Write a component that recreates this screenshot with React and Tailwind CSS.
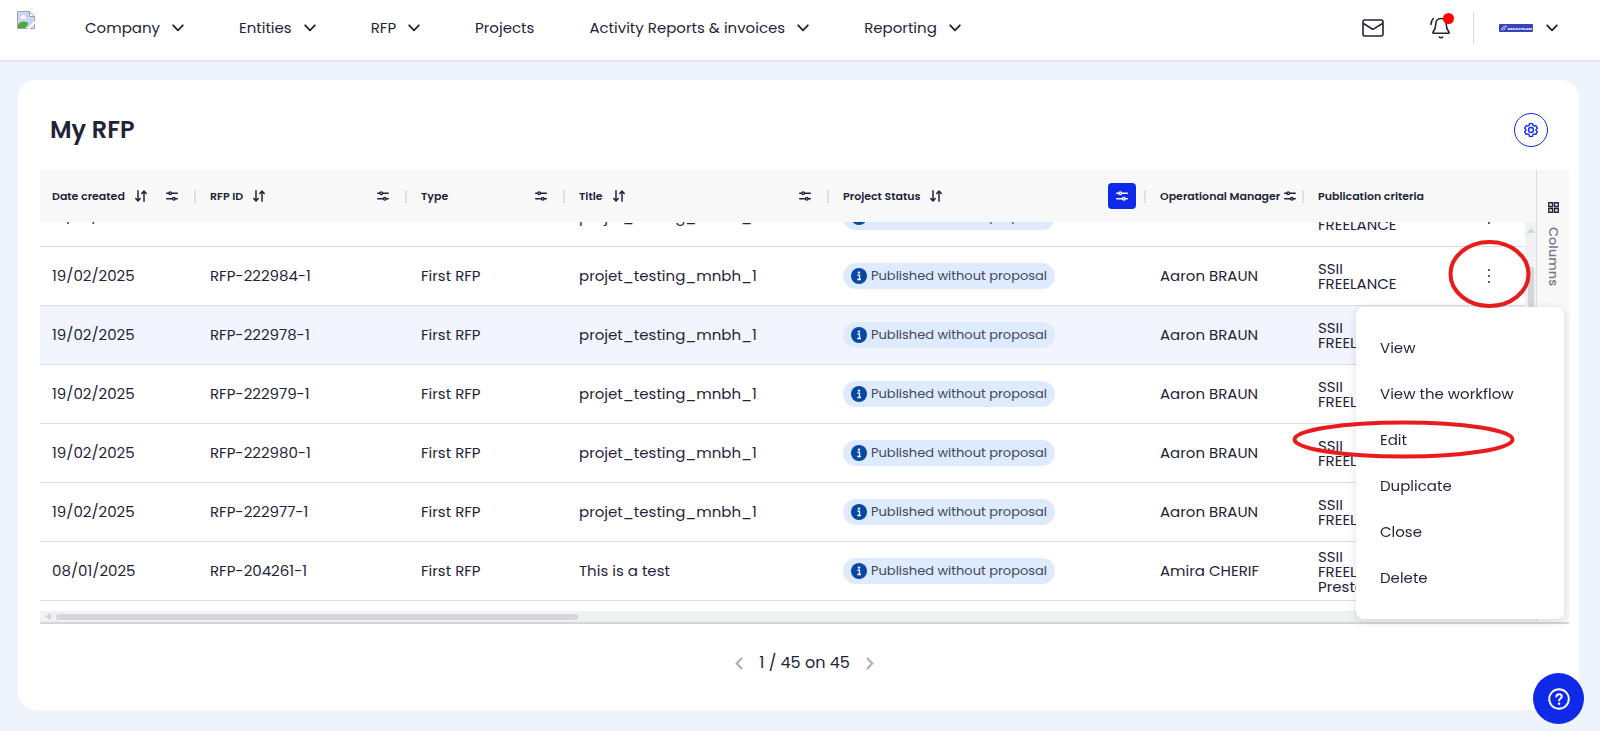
import { useLayoutEffect, useRef } from "react";

const NAV = [
  { label: "Company", menu: true },
  { label: "Entities", menu: true },
  { label: "RFP", menu: true },
  { label: "Projects", menu: false },
  { label: "Activity Reports & invoices", menu: true },
  { label: "Reporting", menu: true },
];

const COLUMNS = [
  { label: "Date created", sort: true },
  { label: "RFP ID", sort: true },
  { label: "Type", sort: false },
  { label: "Title", sort: true },
  { label: "Project Status", sort: true, active: true },
  { label: "Operational Manager", sort: false, tight: true },
];

const row = (date, id, title, manager, criteria, highlighted = false) => ({
  date,
  id,
  title,
  manager,
  criteria,
  highlighted,
});

const BOTH = ["SSII", "FREELANCE"];

const ROWS = [
  row("19/02/2025", "RFP-222985-1", "projet_testing_mnbh_1", "Aaron BRAUN", BOTH),
  row("19/02/2025", "RFP-222984-1", "projet_testing_mnbh_1", "Aaron BRAUN", BOTH),
  row("19/02/2025", "RFP-222978-1", "projet_testing_mnbh_1", "Aaron BRAUN", BOTH, true),
  row("19/02/2025", "RFP-222979-1", "projet_testing_mnbh_1", "Aaron BRAUN", BOTH),
  row("19/02/2025", "RFP-222980-1", "projet_testing_mnbh_1", "Aaron BRAUN", BOTH),
  row("19/02/2025", "RFP-222977-1", "projet_testing_mnbh_1", "Aaron BRAUN", BOTH),
  row("08/01/2025", "RFP-204261-1", "This is a test", "Amira CHERIF", ["SSII", "FREELANCE", "Prestataire"]),
];

const ACTIONS = ["View", "View the workflow", "Edit", "Duplicate", "Close", "Delete"];

function Chevron() {
  return (
    <svg width="12" height="8" viewBox="0 0 12 8" fill="none" stroke="currentColor" strokeWidth="1.8" strokeLinecap="round" strokeLinejoin="round" aria-hidden="true">
      <path d="M1.2 1.3 6 6.3l4.8-5" />
    </svg>
  );
}

function BrokenImage() {
  return (
    <svg width="18" height="18" viewBox="0 0 18 18" aria-hidden="true">
      <path d="M.5.5h12l5 5v12H.5z" fill="#c6d7f5" stroke="#a3a3a3" />
      <path d="M12.5.5v5h5z" fill="#fff" stroke="#a3a3a3" />
      <path d="M3 6.5a1.6 1.6 0 0 1 1.6-1.6 2 2 0 0 1 3.6.6 1.2 1.2 0 0 1 .2 2.2H4a1.3 1.3 0 0 1-1-1.2z" fill="#fff" />
      <path d="M1 17v-3.5c2.5-3.8 8-4.2 10.5-.8L8.2 17z" fill="#4fa83a" />
      <path d="M9.5 18 18 9.5v3L12.5 18z" fill="#fff" />
    </svg>
  );
}

function MailIcon() {
  return (
    <svg width="22" height="18" viewBox="0 0 22 18" fill="none" stroke="currentColor" strokeWidth="1.6" strokeLinejoin="round" aria-hidden="true">
      <rect x="1" y="1" width="20" height="16" rx="2" />
      <path d="m1.500 4.500 8.300 5.200a2.200 2.200 0 0 0 2.400 0l8.300-5.200" />
    </svg>
  );
}

function BellIcon() {
  return (
    <svg width="20" height="22" viewBox="0 0 20 22" fill="none" stroke="currentColor" strokeWidth="1.6" strokeLinecap="round" strokeLinejoin="round" aria-hidden="true">
      <path d="M11 1.5c-3.3 0-5.2 2.5-5.2 5.5 0 4.5-1 5.800-2.700 7.900-.5.7-.2 1.300.5 1.300h14.800c.7 0 1-.6.5-1.300-1.700-2.100-2.700-3.400-2.700-7.900 0-3-1.900-5.500-5.200-5.500z" />
      <path d="M9.300 20c.9 1 2.500 1 3.400 0M3.300 1.500C1.800 3 1 5 1 7.500" />
    </svg>
  );
}

function SortIcon() {
  return (
    <svg width="12" height="12" viewBox="0 0 12 12" fill="none" stroke="currentColor" strokeWidth="1.5" strokeLinecap="round" strokeLinejoin="round" aria-hidden="true">
      <path d="M3 .8v10M.8 8.600 3 11l2.200-2.400M9 11.200v-10M6.800 3.400 9 1l2.200 2.400" />
    </svg>
  );
}

function FilterIcon() {
  return (
    <svg width="12" height="10" viewBox="0 0 12 10" fill="none" stroke="currentColor" strokeWidth="1.4" strokeLinecap="round" aria-hidden="true">
      <circle cx="4.200" cy="2.200" r="1.300" />
      <circle cx="7.800" cy="7.800" r="1.300" />
      <path d="M.7 2.200h2M5.700 2.200h5.600M.7 7.800h5.600M9.300 7.800h2" />
    </svg>
  );
}

function GearIcon() {
  return (
    <svg width="16" height="16" viewBox="0 0 24 24" fill="none" stroke="currentColor" strokeWidth="2" strokeLinecap="round" strokeLinejoin="round" aria-hidden="true">
      <circle cx="12" cy="12" r="3.700" />
      <path d="M9.700 2.500h4.600l.7 2.700 1.500.9 2.700-.8 2.300 4-2 1.900v1.600l2 1.900-2.300 4-2.700-.8-1.500.9-.7 2.700H9.700L9 18.800l-1.500-.9-2.700.8-2.300-4 2-1.900v-1.600l-2-1.900 2.300-4 2.700.8L9 5.200z" />
    </svg>
  );
}

function GridIcon() {
  return (
    <svg width="11" height="11" viewBox="0 0 11 11" fill="none" stroke="currentColor" strokeWidth="1.4" aria-hidden="true">
      <path d="M.8.8h3.700v3.700H.8zM6.500.8h3.700v3.700H6.500zM.8 6.500h3.700v3.700H.8zM6.500 6.500h3.700v3.700H6.500z" />
    </svg>
  );
}

function InfoIcon() {
  return (
    <svg width="16" height="16" viewBox="0 0 16 16" aria-hidden="true">
      <circle cx="8" cy="8" r="8" fill="#0747a6" />
      <circle cx="8" cy="4.600" r="1.200" fill="#fff" />
      <path d="M6.300 7.200h2.200v4M6.200 11.500h3.800" stroke="#fff" strokeWidth="1.3" fill="none" />
    </svg>
  );
}

function BrandBadge() {
  return (
    <svg width="34" height="8" viewBox="0 0 34 8" role="img" aria-label="Decathlon">
      <rect width="34" height="8" rx="1" fill="#3643ba" />
      <path d="M2.500 5.800c0-2 2-3.600 5-3.900L6.400 3.800c-1.500.9-2.600 1.600-3.900 2zM4.500 6l1.600-1.200" fill="none" stroke="#fff" strokeWidth=".7" />
      <text x="8.500" y="5.500" fontSize="4" fontWeight="700" fill="#fff">
        DECATHLON
      </text>
    </svg>
  );
}

function Header() {
  return (
    <header className="flex h-[62px] shrink-0 items-center border-b-2 border-[#e3e5e9] bg-white pr-[42px] pb-1 pl-[17px]">
      <a href="#home" aria-label="Home" className="mb-4">
        <BrokenImage />
      </a>
      <nav className="ml-[50px] flex items-center gap-[55px]">
        {NAV.map((item) => (
          <button key={item.label} type="button" className="flex items-center gap-3 text-[15px] whitespace-nowrap">
            {item.label}
            {item.menu && <Chevron />}
          </button>
        ))}
      </nav>
      <div className="ml-auto flex items-center">
        <button type="button" aria-label="Messages">
          <MailIcon />
        </button>
        <button type="button" aria-label="Notifications" className="relative ml-[46px]">
          <BellIcon />
          <span className="absolute -top-1 -right-1 size-[11px] rounded-full bg-[#ff0000]" />
        </button>
        <span className="ml-[23px] h-8 w-px bg-[#d8d9dd]" />
        <button type="button" aria-label="Account" className="ml-[25px] flex items-center gap-[13px]">
          <BrandBadge />
          <Chevron />
        </button>
      </div>
    </header>
  );
}

function HeadCell({ column }) {
  return (
    <th scope="col" className="sticky top-0 z-10 h-[52px] bg-[#f8f8f8] p-0 pl-3 text-left font-semibold">
      <div className="flex items-center">
        <span className="whitespace-nowrap">{column.label}</span>
        {column.sort && (
          <button type="button" aria-label={"Sort by " + column.label} className="ml-[10px]">
            <SortIcon />
          </button>
        )}
        <button
          type="button"
          aria-label={"Filter " + column.label}
          className={
            column.active
              ? "mr-2 ml-auto flex h-[26px] w-7 items-center justify-center rounded bg-[#0f29e8] text-white"
              : column.tight
                ? "mr-[6px] ml-auto"
                : "mr-4 ml-auto"
          }
        >
          <FilterIcon />
        </button>
        <span className="mr-[2px] h-[13px] w-[2px] bg-[#dfe0e4]" />
      </div>
    </th>
  );
}

function Row({ data }) {
  return (
    <tr className={data.highlighted ? "bg-[#f2f5fe]" : "bg-white"}>
      <td className="h-[59px] border-b border-[#dcdde0] p-0 pl-3">{data.date}</td>
      <td className="border-b border-[#dcdde0] p-0 pl-3">{data.id}</td>
      <td className="border-b border-[#dcdde0] p-0 pl-3">First RFP</td>
      <td className="border-b border-[#dcdde0] p-0 pl-3">{data.title}</td>
      <td className="border-b border-[#dcdde0] p-0 pl-3">
        <span className="inline-flex h-[26px] items-center gap-1 rounded-full bg-[#deebff] px-2 align-middle text-[13px] text-[#42465a]">
          <InfoIcon />
          Published without proposal
        </span>
      </td>
      <td className="border-b border-[#dcdde0] p-0 pl-3">{data.manager}</td>
      <td className="border-b border-[#dcdde0] p-0 pr-[33px] pl-3 leading-[15px]">
        <div className="flex items-center justify-between">
          <div>
            {data.criteria.map((name) => (
              <div key={name}>{name}</div>
            ))}
          </div>
          <button type="button" aria-label={"Actions for " + data.id} className="flex flex-col gap-[4px] p-[2px]">
            <i className="size-[2px] bg-[#5b5f70]" />
            <i className="size-[2px] bg-[#5b5f70]" />
            <i className="size-[2px] bg-[#5b5f70]" />
          </button>
        </div>
      </td>
    </tr>
  );
}

function Grid() {
  const viewport = useRef(null);

  useLayoutEffect(() => {
    viewport.current.scrollTop = viewport.current.scrollHeight;
  }, []);

  return (
    <div className="relative flex min-h-0 flex-1 border-b-2 border-[#d3d5d9]">
      <div className="flex min-w-0 flex-1 flex-col">
        <div className="flex min-h-0 flex-1">
          <div ref={viewport} className="min-w-0 flex-1 overflow-hidden pb-[10px]">
            <table className="w-full table-fixed border-separate border-spacing-0">
              <colgroup>
                <col className="w-[158px]" />
                <col className="w-[211px]" />
                <col className="w-[158px]" />
                <col className="w-[264px]" />
                <col className="w-[317px]" />
                <col className="w-[158px]" />
                <col />
              </colgroup>
              <thead className="text-[11px]">
                <tr>
                  {COLUMNS.map((column) => (
                    <HeadCell key={column.label} column={column} />
                  ))}
                  <th scope="col" className="sticky top-0 z-10 bg-[#f8f8f8] p-0 pl-3 text-left font-semibold">
                    Publication criteria
                  </th>
                </tr>
              </thead>
              <tbody className="text-[15px]">
                {ROWS.map((data) => (
                  <Row key={data.id} data={data} />
                ))}
              </tbody>
            </table>
          </div>
          <div className="flex w-[11px] flex-col items-center bg-[#f0f1f3]">
            <div className="h-[52px] w-full bg-[#f8f8f8]" />
            <svg width="8" height="5" viewBox="0 0 8 5" className="mt-[6px]" aria-hidden="true">
              <path d="M4 0 8 5H0z" fill="#d3d3d8" />
            </svg>
            <div className="mt-[34px] h-[120px] w-[6px] rounded-full bg-[#d5d5da]" />
          </div>
        </div>
        <div className="flex h-[11px] items-center bg-[#f0f1f3] pl-[5px]">
          <svg width="6" height="7" viewBox="0 0 6 7" aria-hidden="true">
            <path d="M0 3.500 6 0v7z" fill="#d3d3d8" />
          </svg>
          <div className="ml-[5px] h-[6px] w-[35%] rounded-full bg-[#d5d5da]" />
        </div>
      </div>
      <aside className="w-[33px] border-l border-[#dcdde0] bg-[#f8f8f8] pt-8">
        <button type="button" className="flex w-full flex-col items-center gap-[14px]">
          <GridIcon />
          <span className="text-[13px] leading-4 font-medium text-[#757885] [writing-mode:vertical-rl]">Columns</span>
        </button>
      </aside>

      <div role="menu" className="absolute top-[137px] right-[5px] z-20 w-[208px] rounded-lg bg-white py-[18px] shadow-[0_2px_10px_rgba(30,35,60,0.14)]">
        {ACTIONS.map((action) => (
          <button key={action} type="button" role="menuitem" className="block h-[46px] w-full pl-6 text-left text-[15px]">
            {action}
          </button>
        ))}
      </div>

      <svg width="83" height="68" viewBox="0 0 83 68" className="absolute top-[70px] right-[38px] z-30" aria-hidden="true">
        <ellipse cx="41.500" cy="34" rx="39" ry="32" fill="none" stroke="#e81c1c" strokeWidth="4" />
      </svg>
      <svg width="223" height="39" viewBox="0 0 223 39" className="absolute top-[250px] right-[54px] z-30" aria-hidden="true">
        <ellipse cx="111.500" cy="19.500" rx="109" ry="17" fill="none" stroke="#e81c1c" strokeWidth="4" />
      </svg>
    </div>
  );
}

export default function App() {
  return (
    <div className="flex h-screen flex-col overflow-hidden bg-[#eff4fc] font-[Poppins,Inter,sans-serif] text-[#1f2439]">
      <Header />
      <main className="mt-[18px] mr-[21px] mb-[21px] ml-[18px] flex min-h-0 flex-1 flex-col rounded-[18px] bg-white pr-[10px] pl-[22px]">
        <div className="flex h-[90px] shrink-0 items-center justify-between pt-[10px] pr-[21px] pl-[10px]">
          <h1 className="text-2xl font-semibold">My RFP</h1>
          <button type="button" aria-label="Settings" className="flex size-[34px] items-center justify-center rounded-full border border-[#0f29e8] text-[#0f29e8]">
            <GearIcon />
          </button>
        </div>
        <Grid />
        <div className="flex h-[86px] shrink-0 items-center justify-center gap-4 pb-2 text-base">
          <button type="button" aria-label="Previous page" className="text-[#b4b4b8]">
            <svg width="8" height="13" viewBox="0 0 8 13" fill="none" stroke="currentColor" strokeWidth="2.4" aria-hidden="true">
              <path d="M7 1 1.800 6.500 7 12" />
            </svg>
          </button>
          <span>1 / 45 on 45</span>
          <button type="button" aria-label="Next page" className="text-[#b4b4b8]">
            <svg width="8" height="13" viewBox="0 0 8 13" fill="none" stroke="currentColor" strokeWidth="2.4" aria-hidden="true">
              <path d="m1 1 5.200 5.500L1 12" />
            </svg>
          </button>
        </div>
      </main>
      <button type="button" aria-label="Help" className="fixed right-4 bottom-[7px] z-40 flex size-[51px] items-center justify-center rounded-full bg-[#0f29e8] text-white">
        <svg width="22" height="22" viewBox="0 0 22 22" fill="none" stroke="currentColor" strokeWidth="1.900" strokeLinecap="round" aria-hidden="true">
          <circle cx="11" cy="11" r="9.800" />
          <path d="M8.300 8.600c.2-1.500 1.300-2.400 2.800-2.400s2.700.9 2.700 2.300c0 2-2.700 2-2.700 4.100" />
          <path d="M11.100 15.700v.1" strokeWidth="2.400" />
        </svg>
      </button>
    </div>
  );
}
